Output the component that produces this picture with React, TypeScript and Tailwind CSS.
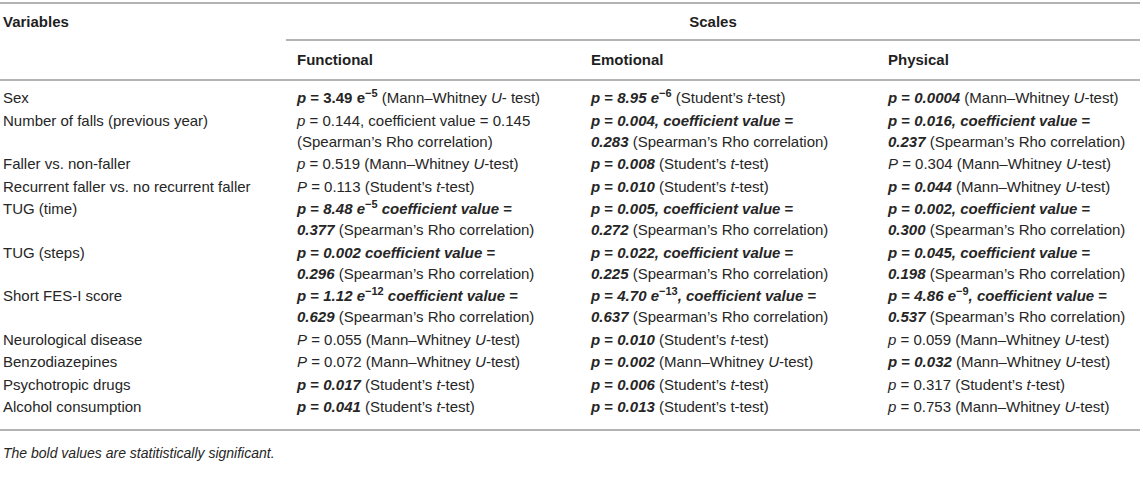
import type { ReactNode } from "react";

// bold significant value helpers
const Sig = ({ children }: { children: ReactNode }) => (
  <b className="font-bold">
    <i>p</i> = <i>{children}</i>
  </b>
);

const Exp = ({ children }: { children: ReactNode }) => (
  <sup className="-top-[6px] text-[11px] font-bold">{children}</sup>
);

const MW = () => (
  <>
    (Mann–Whitney <i>U</i>-test)
  </>
);

const ST = () => (
  <>
    (Student&rsquo;s <i>t</i>-test)
  </>
);

const SR = "(Spearman’s Rho correlation)";

const ROWS: Array<{ label: string; cells: ReactNode[] }> = [
  {
    label: "Sex",
    cells: [
      <>
        <b>
          <i>p</i> = 3.49 e<Exp>−5</Exp>
        </b>{" "}
        (Mann–Whitney <i>U</i>- test)
      </>,
      <>
        <b>
          <i>p</i> = <i>8.95 e</i>
          <Exp>−6</Exp>
        </b>{" "}
        <ST />
      </>,
      <>
        <Sig>0.0004</Sig> <MW />
      </>
    ]
  },
  {
    label: "Number of falls (previous year)",
    cells: [
      <>
        <i>p</i> = 0.144, coefficient value = 0.145
        <br />
        {SR}
      </>,
      <>
        <Sig>0.004, coefficient value</Sig> <b>=</b>
        <br />
        <b>
          <i>0.283</i>
        </b>{" "}
        {SR}
      </>,
      <>
        <Sig>0.016, coefficient value</Sig> <b>=</b>
        <br />
        <b>
          <i>0.237</i>
        </b>{" "}
        {SR}
      </>
    ]
  },
  {
    label: "Faller vs. non-faller",
    cells: [
      <>
        <i>p</i> = 0.519 <MW />
      </>,
      <>
        <Sig>0.008</Sig> <ST />
      </>,
      <>
        <i>P</i> = 0.304 <MW />
      </>
    ]
  },
  {
    label: "Recurrent faller vs. no recurrent faller",
    cells: [
      <>
        <i>P</i> = 0.113 <ST />
      </>,
      <>
        <Sig>0.010</Sig> <ST />
      </>,
      <>
        <Sig>0.044</Sig> <MW />
      </>
    ]
  },
  {
    label: "TUG (time)",
    cells: [
      <>
        <b>
          <i>p</i> = <i>8.48 e</i>
          <Exp>−5</Exp> <i>coefficient value</i> =
        </b>
        <br />
        <b>
          <i>0.377</i>
        </b>{" "}
        {SR}
      </>,
      <>
        <Sig>0.005, coefficient value</Sig> <b>=</b>
        <br />
        <b>
          <i>0.272</i>
        </b>{" "}
        {SR}
      </>,
      <>
        <Sig>0.002, coefficient value</Sig> <b>=</b>
        <br />
        <b>
          <i>0.300</i>
        </b>{" "}
        {SR}
      </>
    ]
  },
  {
    label: "TUG (steps)",
    cells: [
      <>
        <Sig>0.002 coefficient value</Sig> <b>=</b>
        <br />
        <b>
          <i>0.296</i>
        </b>{" "}
        {SR}
      </>,
      <>
        <Sig>0.022, coefficient value</Sig> <b>=</b>
        <br />
        <b>
          <i>0.225</i>
        </b>{" "}
        {SR}
      </>,
      <>
        <Sig>0.045, coefficient value</Sig> <b>=</b>
        <br />
        <b>
          <i>0.198</i>
        </b>{" "}
        {SR}
      </>
    ]
  },
  {
    label: "Short FES-I score",
    cells: [
      <>
        <b>
          <i>p</i> = <i>1.12 e</i>
          <Exp>−12</Exp> <i>coefficient value</i> =
        </b>
        <br />
        <b>
          <i>0.629</i>
        </b>{" "}
        {SR}
      </>,
      <>
        <b>
          <i>p</i> = <i>4.70 e</i>
          <Exp>−13</Exp>
          <i>, coefficient value</i> =
        </b>
        <br />
        <b>
          <i>0.637</i>
        </b>{" "}
        {SR}
      </>,
      <>
        <b>
          <i>p</i> = <i>4.86 e</i>
          <Exp>−9</Exp>
          <i>, coefficient value</i> =
        </b>
        <br />
        <b>
          <i>0.537</i>
        </b>{" "}
        {SR}
      </>
    ]
  },
  {
    label: "Neurological disease",
    cells: [
      <>
        <i>P</i> = 0.055 <MW />
      </>,
      <>
        <Sig>0.010</Sig> <ST />
      </>,
      <>
        <i>p</i> = 0.059 <MW />
      </>
    ]
  },
  {
    label: "Benzodiazepines",
    cells: [
      <>
        <i>P</i> = 0.072 <MW />
      </>,
      <>
        <Sig>0.002</Sig> <MW />
      </>,
      <>
        <Sig>0.032</Sig> <MW />
      </>
    ]
  },
  {
    label: "Psychotropic drugs",
    cells: [
      <>
        <Sig>0.017</Sig> <ST />
      </>,
      <>
        <Sig>0.006</Sig> <ST />
      </>,
      <>
        <i>p</i> = 0.317 <ST />
      </>
    ]
  },
  {
    label: "Alcohol consumption",
    cells: [
      <>
        <Sig>0.041</Sig> <ST />
      </>,
      <>
        <Sig>0.013</Sig> (Student&rsquo;s t-test)
      </>,
      <>
        <i>p</i> = 0.753 <MW />
      </>
    ]
  }
];

export default function App() {
  return (
    <div className="min-h-screen bg-white pt-[2px] font-['Liberation_Sans',Arial,sans-serif] text-[15px] leading-[21px] text-[#262626]">
      <table className="w-[1140px] table-fixed border-collapse">
        <colgroup>
          <col className="w-[286px]" />
          <col className="w-[294px]" />
          <col className="w-[297px]" />
          <col className="w-[263px]" />
        </colgroup>
        <thead>
          <tr className="border-t-2 border-[#b3b3b3]">
            <th rowSpan={2} className="pl-[3px] pt-[7px] text-left align-top font-bold text-[#1f1f1f]">
              Variables
            </th>
            <th colSpan={3} className="border-b-2 border-[#b3b3b3] pt-[7px] pb-[7px] text-center font-bold text-[#1f1f1f]">
              Scales
            </th>
          </tr>
          <tr className="border-b-2 border-[#b3b3b3]">
            {["Functional", "Emotional", "Physical"].map((h) => (
              <th key={h} className="pl-[11px] pt-[8px] pb-[9px] text-left font-bold text-[#1f1f1f]">
                {h}
              </th>
            ))}
          </tr>
        </thead>
        <tbody className="border-b-2 border-[#b3b3b3]">
          {ROWS.map((row, i) => {
            const pad =
              i === 0 ? "pt-[6px] pb-[0.75px]" : i === ROWS.length - 1 ? "pt-[0.75px] pb-[12px]" : "py-[0.75px]";
            return (
              <tr key={row.label}>
                <td className={`pl-[3px] align-top ${pad}`}>{row.label}</td>
                {row.cells.map((c, j) => (
                  <td key={j} className={`whitespace-nowrap pl-[11px] align-top ${pad}`}>
                    {c}
                  </td>
                ))}
              </tr>
            );
          })}
        </tbody>
      </table>
      <p className="mt-[12px] pl-[3px] text-[14px] italic leading-[21px]">
        The bold values are statitistically significant.
      </p>
    </div>
  );
}
